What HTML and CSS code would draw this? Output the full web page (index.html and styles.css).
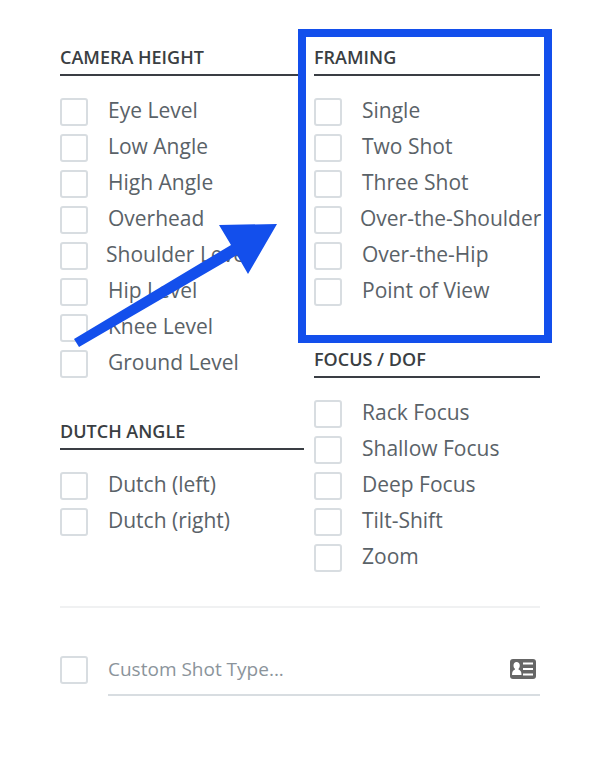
FILE: index.html
```html
<!DOCTYPE html>
<html lang="en">
<head>
<meta charset="utf-8">
<meta name="viewport" content="width=device-width, initial-scale=1">
<title>Shot types</title>
<link rel="stylesheet" href="styles.css">
</head>
<body>
<form class="panel">
  <div class="columns">
    <div class="column">
      <section class="group">
        <h2 class="heading">CAMERA HEIGHT</h2>
        <div class="options">
          <label class="option"><input class="box" type="checkbox">Eye Level</label>
          <label class="option"><input class="box" type="checkbox">Low Angle</label>
          <label class="option"><input class="box" type="checkbox">High Angle</label>
          <label class="option"><input class="box" type="checkbox">Overhead</label>
          <label class="option option-long"><input class="box" type="checkbox">Shoulder Level</label>
          <label class="option"><input class="box" type="checkbox">Hip Level</label>
          <label class="option"><input class="box" type="checkbox">Knee Level</label>
          <label class="option"><input class="box" type="checkbox">Ground Level</label>
        </div>
        <svg class="arrow" width="204" height="124" viewBox="0 0 204 124" aria-hidden="true">
          <path d="M14 115 171 21 159 1 217 0 188 50 177 31 19 123Z"/>
        </svg>
      </section>
      <section class="group">
        <h2 class="heading">DUTCH ANGLE</h2>
        <div class="options">
          <label class="option"><input class="box" type="checkbox">Dutch (left)</label>
          <label class="option"><input class="box" type="checkbox">Dutch (right)</label>
        </div>
      </section>
    </div>
    <div class="column">
      <section class="group highlighted">
        <h2 class="heading">FRAMING</h2>
        <div class="options">
          <label class="option"><input class="box" type="checkbox">Single</label>
          <label class="option"><input class="box" type="checkbox">Two Shot</label>
          <label class="option"><input class="box" type="checkbox">Three Shot</label>
          <label class="option option-long"><input class="box" type="checkbox">Over-the-Shoulder</label>
          <label class="option"><input class="box" type="checkbox">Over-the-Hip</label>
          <label class="option"><input class="box" type="checkbox">Point of View</label>
        </div>
      </section>
      <section class="group">
        <h2 class="heading">FOCUS / DOF</h2>
        <div class="options">
          <label class="option"><input class="box" type="checkbox">Rack Focus</label>
          <label class="option"><input class="box" type="checkbox">Shallow Focus</label>
          <label class="option"><input class="box" type="checkbox">Deep Focus</label>
          <label class="option"><input class="box" type="checkbox">Tilt-Shift</label>
          <label class="option"><input class="box" type="checkbox">Zoom</label>
        </div>
      </section>
    </div>
  </div>
  <div class="custom">
    <input class="box" type="checkbox" aria-label="Use custom shot type">
    <div class="field">
      <input class="text" type="text" placeholder="Custom Shot Type..." aria-label="Custom shot type">
      <svg class="card" width="26" height="20" viewBox="0 0 26 20" aria-hidden="true">
        <rect width="26" height="20" rx="3" fill="#666"/>
        <path fill="#fff" d="M6.500 3C8.500 3 9.800 4.500 9.800 6.500C9.800 8 9.200 9 8.500 9.800V10.500C10.500 11.300 11.500 12.500 11.500 16H2C2 12.500 3 11.300 5 10.500V9.800C4 9 3.500 8 3.500 6.500C3.500 4.500 4.700 3 6.500 3ZM13 3.500H23V5.500H13ZM13 9H23V11H13ZM13 14.500H23V16.500H13Z"/>
      </svg>
    </div>
  </div>
</form>
</body>
</html>
```

FILE: styles.css
```css
* {
  box-sizing: border-box;
}

body {
  margin: 0;
  background: #fff;
  color: #5a6268;
  font-family: "Open Sans", sans-serif;
  font-size: 21px;
}

.panel {
  padding: 46px 56px 66px 60px;
}

.columns {
  display: grid;
  grid-template-columns: 244fr 226fr;
  gap: 10px;
  padding-bottom: 26px;
  border-bottom: 2px solid #f0f1f2;
}

.column {
  display: flex;
  flex-direction: column;
  gap: 34px;
  min-width: 0;
}

.group {
  position: relative;
}

.heading {
  margin: 0 0 22px;
  padding-bottom: 6px;
  border-bottom: 2px solid #3a3e44;
  color: #3a3e42;
  font-size: 18px;
  font-weight: 600;
  line-height: 22px;
}

.option {
  display: flex;
  gap: 20px;
  height: 36px;
  line-height: 24px;
  white-space: nowrap;
}

.option-long {
  gap: 18px;
}

.box {
  appearance: none;
  flex: none;
  width: 28px;
  height: 28px;
  margin: 0;
  border: 2px solid #d8dde1;
  border-radius: 3px;
  background: #fff;
}

.box:checked {
  background: #134fec;
}

.highlighted::after {
  content: "";
  position: absolute;
  inset: -17px -12px -29px -16px;
  border: 8px solid #134fec;
  pointer-events: none;
}

.arrow {
  position: absolute;
  top: 178px;
  left: 0;
  overflow: visible;
  fill: #134fec;
  pointer-events: none;
}

.custom {
  display: flex;
  align-items: flex-start;
  gap: 20px;
  padding-top: 48px;
}

.field {
  display: flex;
  flex: 1;
  align-items: center;
  height: 40px;
  padding: 0 4px 12px 0;
  border-bottom: 2px solid #d8dde1;
}

.text {
  flex: 1;
  min-width: 0;
  padding: 0;
  border: 0;
  outline: 0;
  background: none;
  color: #5a6268;
  font: inherit;
  font-size: 19px;
  line-height: 26px;
}

.text::placeholder {
  color: #8b949b;
  opacity: 1;
}

.card {
  flex: none;
}
```
